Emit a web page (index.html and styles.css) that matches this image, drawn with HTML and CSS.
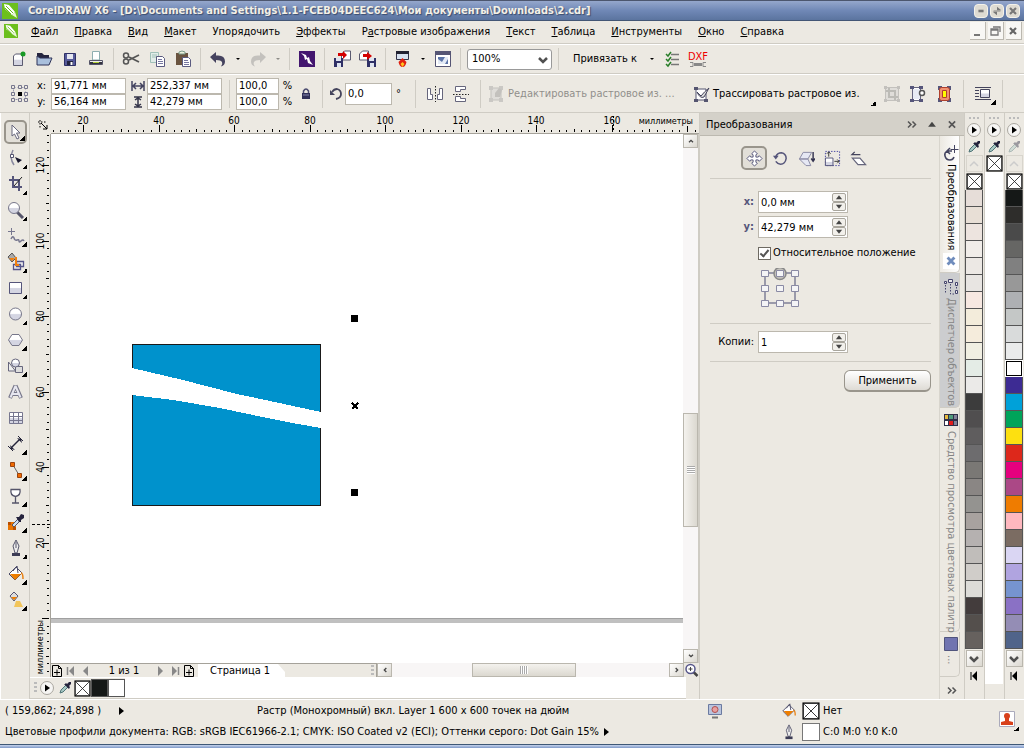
FILE: index.html
```html
<!DOCTYPE html>
<html lang="ru">
  <head>
    <meta charset="UTF-8" />
    <meta name="viewport" content="width=device-width, initial-scale=1.0" />
    <title>CorelDRAW X6</title>
    <link rel="stylesheet" href="styles.css">
  </head>
  <body>
    <svg class="defs">
      <defs>
        <linearGradient id="metal" x1="0" y1="0" x2="0" y2="1">
          <stop offset="0.45" stop-color="#fff" />
          <stop offset="0.55" stop-color="#d4d5e2" />
        </linearGradient>
        <symbol id="logo" viewBox="0 0 16 16">
          <rect width="16" height="16" fill="#6cbf1d" />
          <path d="M2 1l5 1 6 7-3 3-7-6z" fill="#fff" />
          <path d="M10 12l3-3 2 6z" fill="#e8f5d8" />
          <path d="M4 3l7 7M3 5l6 6" stroke="#6cbf1d" />
        </symbol>
        <symbol id="dropper" viewBox="0 0 14 14">
          <path d="M2 12l1-3 5-5 2 2-5 5z" fill="#a8c8c4" stroke="#4f7477" />
          <path d="M7 3l1-1 1 1 2-2h2v2l-2 2 1 1-1 2-5-5z" fill="#25233c" />
        </symbol>
        <symbol id="play" viewBox="0 0 16 16">
          <circle cx="8" cy="8" r="6.5" fill="#f6f5f3" stroke="#aaa7a0" />
          <path d="M6 4.500l5 3.500-5 3.500z" fill="#000" />
        </symbol>
        <symbol id="nocolor" viewBox="0 0 16 16">
          <rect x="1" y="1" width="14" height="14" fill="#fff" stroke="#000" stroke-width="1.200" />
          <path d="M2 2l12 12M14 2L2 14" stroke="#222" stroke-width=".8" />
        </symbol>
        <symbol id="addpage" viewBox="0 0 12 12">
          <path d="M1.500 .5h6l3 3v8h-9zM7.500 .5v3h3M3 7.500h6M6 4.500v6" fill="none" stroke="#000" />
        </symbol>
        <symbol id="bucket" viewBox="0 0 18 18">
          <path d="M2 9l7-7 6 6-7 7z" fill="#fff" stroke="#4b4b67" />
          <path d="M3 9h11l-6 6z" fill="#ee7e00" />
          <path d="M6 6l4-5 1 7" fill="none" stroke="#4b4b67" />
          <path d="M14 8q2 0 2 6" fill="none" stroke="#e88010" stroke-width="1.500" />
        </symbol>
        <symbol id="nib" viewBox="0 0 18 18">
          <path d="M9 1l3 6-2 7H8L6 7z" fill="#eee" stroke="#55556b" />
          <path d="M9 3v6" stroke="#55556b" />
          <path d="M5 14h8v3H5z" fill="#3c3c55" />
        </symbol>
        <symbol id="up" viewBox="0 0 9 5"><path d="M1 4.500L4.500 0 8 4.500z" fill="#444" /></symbol>
        <symbol id="down" viewBox="0 0 9 5"><path d="M1 .5h7L4.500 5z" fill="#444" /></symbol>
        <symbol id="angle" viewBox="0 0 9 6"><path d="M1.500 5l3-3 3 3" fill="none" stroke="#444" stroke-width="2" /></symbol>
        <symbol id="chevron" viewBox="0 0 10 10"><path d="M1 3l4 4 4-4" fill="none" stroke="#505050" stroke-width="2.500" /></symbol>
        <symbol id="more" viewBox="0 0 10 8"><path d="M1 1l3 3-3 3M5.500 1l3 3-3 3" fill="none" stroke="#555" stroke-width="1.500" /></symbol>
      </defs>
    </svg>

    <header class="titlebar">
      <svg class="ic16"><use href="#logo" /></svg>
      <h1>CorelDRAW X6 - [D:\Documents and Settings\1.1-FCEB04DEEC624\Мои документы\Downloads\2.cdr]</h1>
      <button class="winbtn" aria-label="Свернуть"><svg viewBox="0 0 14 14"><path d="M4 7h6" stroke="#777" stroke-width="3" /></svg></button>
      <button class="winbtn" aria-label="Развернуть"><svg viewBox="0 0 14 14"><path d="M7 2v4h5zM7 12V8H2z" fill="#777" /><path d="M3 7h8" stroke="#777" /></svg></button>
      <button class="winbtn" aria-label="Закрыть"><svg viewBox="0 0 14 14"><path d="M3.500 3.500l7 7M10.500 3.500l-7 7" stroke="#777" stroke-width="2.500" /></svg></button>
    </header>

    <nav class="menubar">
      <svg class="doc-logo"><use href="#logo" /></svg>
      <button><u>Ф</u>айл</button>
      <button><u>П</u>равка</button>
      <button><u>В</u>ид</button>
      <button><u>М</u>акет</button>
      <button>Упоря<u>д</u>очить</button>
      <button><u>Э</u>ффекты</button>
      <button>Р<u>а</u>стровые изображения</button>
      <button><u>Т</u>екст</button>
      <button><u>Т</u>аблица</button>
      <button><u>И</u>нструменты</button>
      <button><u>О</u>кно</button>
      <button><u>С</u>правка</button>
      <span class="fill"></span>
      <button class="mdi" aria-label="Свернуть документ"><svg viewBox="0 0 14 14"><path d="M4 11h6" stroke="#777" stroke-width="2" /></svg></button>
      <button class="mdi" aria-label="Восстановить документ"><svg viewBox="0 0 14 14"><path d="M5 3h7v5M3 5h7v6H3zM3 6h7" fill="none" stroke="#777" stroke-width="1.300" /></svg></button>
      <button class="mdi" aria-label="Закрыть документ"><svg viewBox="0 0 14 14"><path d="M4 4l6 6M10 4l-6 6" stroke="#666" stroke-width="2.200" /></svg></button>
    </nav>

    <div class="toolbar">
      <button class="tool" aria-label="Создать"><svg viewBox="0 0 18 18"><path d="M4.500 6l2-2h7v11.500h-9z" fill="url(#metal)" stroke="#5b5b70" /><circle cx="14" cy="4" r="2.500" fill="#189a26" /></svg></button>
      <button class="tool" aria-label="Открыть"><svg viewBox="0 0 18 18"><path d="M2 3h5l2 2h5v3H2z" fill="#25253f" /><path d="M2 15V6l3 2h12l-3 7z" fill="#a9bfdc" stroke="#2e3358" /></svg></button>
      <button class="tool" aria-label="Сохранить"><svg viewBox="0 0 18 18"><path d="M3.500 3.500h11v12h-11z" fill="#565a9a" stroke="#2f3066" /><path d="M6 4h6v5H6z" fill="#e4e6f0" /><path d="M6 11h6v4H6z" fill="#232440" /><path d="M9.500 12h2v3h-2z" fill="#fff" /></svg></button>
      <button class="tool" aria-label="Печать"><svg viewBox="0 0 18 18"><path d="M5.500 1.500h7V10h-7z" fill="#fff" stroke="#8faeb0" /><path d="M2.500 10.500h13v4h-13z" fill="#eee" stroke="#555568" /><path d="M3 12h12v2H3z" fill="#33333f" /><path d="M6 12h6v1H6z" fill="#b5d43b" /></svg></button>
      <i class="sep"></i>
      <button class="tool" aria-label="Вырезать"><svg viewBox="0 0 18 18"><path d="M17 5L7 10M17 12L7 7" stroke="#555" stroke-width="1.800" /><circle cx="4" cy="5.500" r="2.500" fill="none" stroke="#555" stroke-width="1.500" /><circle cx="4" cy="11.500" r="2.500" fill="none" stroke="#555" stroke-width="1.500" /></svg></button>
      <button class="tool" aria-label="Копировать"><svg viewBox="0 0 18 18"><path d="M2.500 2.500h8v10h-8z" fill="#e1ece8" stroke="#9fc0b8" /><path d="M4 5h5M4 7h5" stroke="#9fc0b8" /><path d="M8.500 6.500h6l2 2v8h-8z" fill="#fff" stroke="#5b5b80" /><path d="M10 9.500h4M10 11.500h5M10 13.500h5" stroke="#7777a0" /></svg></button>
      <button class="tool" aria-label="Вставить"><svg viewBox="0 0 18 18"><path d="M2 3h12v12H2z" fill="#6a5440" /><path d="M5 4V2l3-1 3 1v2z" fill="#eef4e0" stroke="#7b9a88" /><path d="M8.500 7.500h6l2 2v7h-8z" fill="#fff" stroke="#5b5b80" /><path d="M10 10.500h4M10 12.500h5M10 14.500h5" stroke="#7777a0" /></svg></button>
      <i class="sep"></i>
      <button class="tool" aria-label="Отменить"><svg viewBox="0 0 18 18"><path d="M1 7l6-5v3.500q9-1 9 6 0 4-4 5 2-2 1-4.500-1-2-6-2V13z" fill="#45435f" /></svg></button>
      <button class="caret" aria-label="Список отмены"></button>
      <button class="tool faded" aria-label="Повторить"><svg viewBox="0 0 18 18"><path d="M17 7l-6-5v3.500q-9-1-9 6 0 4 4 5-2-2-1-4.500 1-2 6-2V13z" fill="#888" /></svg></button>
      <button class="caret faded" aria-label="Список повтора"></button>
      <i class="sep"></i>
      <button class="tool" aria-label="Corel Connect"><svg viewBox="0 0 18 18"><path d="M1 1h16v16H1z" fill="#43166f" /><path d="M3 3l5 2 1 3 2-1 1 4 3 4-5-2-1-4-2 1-1-4z" fill="#fff" /></svg></button>
      <i class="sep"></i>
      <button class="tool" aria-label="Импорт"><svg viewBox="0 0 18 18"><path d="M8.500 4l3-3h6v9h-9z" fill="#fff" stroke="#5b5b70" /><path d="M1 8h9v9H1z" fill="#2f3066" /><path d="M3 8h5v3H3zM4 13h4v4H4z" fill="#dfe4f0" /><path d="M5 3h5V1l4 4-4 4V6H5z" fill="#d40000" /></svg></button>
      <button class="tool" aria-label="Экспорт"><svg viewBox="0 0 18 18"><path d="M.5 4l3-3h6v9h-9z" fill="#fff" stroke="#5b5b70" /><path d="M8 8h9v9H8z" fill="#2f3066" /><path d="M10 8h5v3h-5zM11 13h4v4h-4z" fill="#dfe4f0" /><path d="M4 4h4V2l5 4-5 4V7H4z" fill="#d40000" /></svg></button>
      <i class="sep"></i>
      <button class="tool" aria-label="Запуск приложений"><svg viewBox="0 0 18 18"><path d="M2.500 1.500h12v8h-12z" fill="#d8e2f0" stroke="#34344a" /><path d="M2 1h13v3H2z" fill="#222232" /><path d="M8.500 8l4 4q-1 5-4 5t-4-5z" fill="#e02010" /><path d="M8.500 12l2 2-2 3-2-3z" fill="#ffc31e" /></svg></button>
      <button class="caret" aria-label="Приложения"></button>
      <button class="tool" aria-label="Экран приветствия"><svg viewBox="0 0 18 18"><path d="M1.500 1.500h15v15h-15z" fill="#fff" stroke="#555574" /><path d="M1 1h16v4H1z" fill="#555574" /><path d="M4 7h10v7H4z" fill="#5c74a8" /><path d="M4 14V9l4 3 3-5h3v2l-3 5z" fill="#e3eaf5" /></svg></button>
      <i class="sep"></i>
      <div class="zoom">
        <select aria-label="Масштаб"><option>100%</option></select>
        <svg><use href="#chevron" /></svg>
      </div>
      <i class="sep"></i>
      <button class="textbtn">Привязать к</button>
      <button class="caret" aria-label="Варианты привязки"></button>
      <button class="tool" aria-label="Параметры"><svg viewBox="0 0 18 18"><path d="M8 4.500h8M8 9.500h8M8 14.500h8" stroke="#777" stroke-width="1.500" /><path d="M3 4l2 2 3-4M3 9l2 2 3-4M3 14l2 2 3-4" fill="none" stroke="#2a7f2a" stroke-width="1.500" /></svg></button>
      <button class="dxf" aria-label="DXF">DXF<svg viewBox="0 0 16 5"><path d="M4 2.500h8" stroke="#888" stroke-width="3" /><path d="M0 .5h3v4H0M16 .5h-3v4h3" fill="none" stroke="#888" /></svg></button>
    </div>

    <div class="propbar">
      <svg class="origin" viewBox="0 0 17 17"><path d="M2.500 2.500h12v12h-12z" fill="none" stroke="#9a9ab0" stroke-dasharray="2" /><path d="M7 7h4v4H7z" fill="#000" /><path d="M.5.500h3v3h-3zM7.500.500h3v3h-3zM13.500.500h3v3h-3zM.5 7.500h3v3h-3zM13.500 7.500h3v3h-3zM.5 13.500h3v3h-3zM7.500 13.500h3v3h-3zM13.500 13.500h3v3h-3z" fill="#ece9e2" stroke="#77778e" /></svg>
      <div class="pair">
        <label for="posx">x:</label><input id="posx" value="91,771 мм">
        <label for="posy">y:</label><input id="posy" value="56,164 мм">
      </div>
      <div class="pair">
        <label for="w" aria-label="Ширина"><svg viewBox="0 0 14 12"><path d="M1 1v10M13 1v10M2 6h10M5 3L2 6l3 3M9 3l3 3-3 3" fill="none" stroke="#444460" stroke-width="1.500" /></svg></label><input id="w" value="252,337 мм">
        <label for="h" aria-label="Высота"><svg viewBox="0 0 14 12"><path d="M3 1h8M3 11h8M7 2v8M4 4l3-2 3 2M4 8l3 2 3-2" fill="none" stroke="#333348" stroke-width="1.500" /></svg></label><input id="h" value="42,279 мм">
      </div>
      <i class="sep"></i>
      <div class="pair scale">
        <input id="sx" aria-label="Масштаб X" value="100,0"><label for="sx">%</label>
        <input id="sy" aria-label="Масштаб Y" value="100,0"><label for="sy">%</label>
      </div>
      <button class="tool lock" aria-label="Сохранять пропорции"><svg viewBox="0 0 18 18"><path d="M6.500 9V6q2.500-4 5 0v3" fill="none" stroke="#4c4c70" stroke-width="1.500" /><path d="M5 8h8v6H5z" fill="#303058" /><path d="M6 10h6" stroke="#8888b0" /></svg></button>
      <i class="sep"></i>
      <label class="turn" for="angle" aria-label="Угол поворота"><svg viewBox="0 0 14 14"><path d="M3 5q2-3 5-3 4 1 4 5 0 4-5 5" fill="none" stroke="#44445c" stroke-width="1.800" /><path d="M1 3v5h5z" fill="#44445c" /></svg></label>
      <input class="turn-value" id="angle" value="0,0"><span class="deg">°</span>
      <i class="sep"></i>
      <button class="tool" aria-label="Отразить по горизонтали"><svg viewBox="0 0 18 18"><path d="M1.500 3.500h3v6h2v5h-5zM16.500 3.500h-3v6h-2v5h5z" fill="#fff" stroke="#66667c" /><path d="M9.500 1v16" stroke="#222" stroke-dasharray="1.500" /></svg></button>
      <button class="tool" aria-label="Отразить по вертикали"><svg viewBox="0 0 18 18"><path d="M3.500 6.500v-5h10v3h-5v2zM3.500 11.500v5h10v-3h-5v-2z" fill="#fff" stroke="#66667c" /><path d="M1 9.500h16" stroke="#222" stroke-dasharray="1.500" /></svg></button>
      <i class="sep"></i>
      <button class="textbtn wide faded" disabled><svg viewBox="0 0 18 18"><path d="M4 3h10v12H4z" fill="#ccc" stroke="#888" /><path d="M2 1h4v4H2zM12 1h4v4h-4zM2 13h4v4H2zM12 13h4v4h-4z" fill="#999" /><path d="M8 12V8l4-5 3 2-2 7z" fill="#888" /></svg>Редактировать растровое из. ...</button>
      <button class="textbtn trace"><svg viewBox="0 0 18 18"><path d="M4 4h10v11H4z" fill="#fff" stroke="#555570" /><path d="M2 2h4v3H2zM2 14h4v3H2zM12 14h4v3h-4z" fill="#555570" /><path d="M5 7l4 4q3-4 8-8l-5 9q-4 2-7-5z" fill="#ddd" stroke="#44445c" /></svg>Трассировать растровое из.<b class="corner"></b></button>
      <button class="tool faded" aria-label="Обрезать растр"><svg viewBox="0 0 18 18"><path d="M2.500 2.500h13v13h-13z" fill="#ccc" stroke="#888" /><path d="M6 3v9h9M3 6h9v9" fill="none" stroke="#777" stroke-width="2" /><path d="M1 1h3v3H1zM14 1h3v3h-3zM1 14h3v3H1zM14 14h3v3h-3z" fill="#888" /></svg></button>
      <button class="tool" aria-label="Цветовая маска"><svg viewBox="0 0 18 18"><path d="M3.500 2.500h8v13h-8z" fill="#fff" stroke="#666680" /><path d="M1 1h4v3H1zM10 1h4v3h-4zM1 14h4v3H1zM10 14h4v3h-4z" fill="#55557a" /><path d="M4 4h7v10H4z" fill="#e8ebf4" /><circle cx="13" cy="8" r="2.500" fill="#fff" stroke="#555" stroke-width="1.500" /></svg></button>
      <button class="tool" aria-label="Абрис растра"><svg viewBox="0 0 18 18"><path d="M3 1h4v4H3zM12 1h4v4h-4zM3 13h4v4H3zM12 13h4v4h-4z" fill="#55557a" /><rect x="4.500" y="2.500" width="10" height="13" rx="2" fill="#f09070" stroke="#b0402c" /><path d="M7.500 5.500h4v7h-4z" fill="#ff0" stroke="#b0402c" /></svg></button>
      <i class="sep"></i>
      <button class="tool" aria-label="Обтекание текстом"><svg viewBox="0 0 18 18"><path d="M1 2.500h16M1 5.500h4M1 8.500h4M1 11.500h4M1 14.500h16" stroke="#44445c" /><path d="M6.500 4.500h9v8h-9z" fill="url(#metal)" stroke="#44445c" /></svg><b class="corner"></b></button>
      <i class="sep"></i>
    </div>

    <main class="workspace">
      <div class="toolbox">
        <button class="active" aria-label="Указатель"><svg viewBox="0 0 18 18"><path d="M5 2l8 8H9.500l2.500 5-2 1-2.500-5L5 13z" fill="#fff" stroke="#66667c" /></svg><b class="corner"></b></button>
        <button aria-label="Форма"><svg viewBox="0 0 18 18"><path d="M6 1q-4 8 1 15" fill="none" stroke="#8a8aa0" stroke-width="1.500" /><path d="M3.500 5.500h3v3h-3z" fill="#fff" stroke="#555570" /><path d="M8 8l7 3-4 3z" fill="#15152c" /></svg><b class="corner"></b></button>
        <button aria-label="Обрезка"><svg viewBox="0 0 18 18"><path d="M6 1v11h9M2 5h10v11" fill="none" stroke="#55557a" stroke-width="2" /><path d="M7 11l8-9" stroke="#222" /></svg><b class="corner"></b></button>
        <button aria-label="Масштаб"><svg viewBox="0 0 18 18"><path d="M10 11l6 6" stroke="#55556a" stroke-width="3" /><circle cx="7" cy="7" r="5.500" fill="url(#metal)" stroke="#77778a" /></svg><b class="corner"></b></button>
        <button aria-label="Свободная форма"><svg viewBox="0 0 18 18"><path d="M4.500 1v7M1 4.500h7" stroke="#77778f" /><path d="M4 12q2-4 3-1t3 2 2 1 2 0 3 0" fill="none" stroke="#77778f" stroke-width="1.500" /></svg><b class="corner"></b></button>
        <button aria-label="Интеллектуальная заливка"><svg viewBox="0 0 18 18"><path d="M1 4l4-4 4 5-4 4z" fill="#aaa" stroke="#555" /><path d="M2 5h6L5 8z" fill="#f08010" /><path d="M6.500 11.500h7v5h-7zM9.500 8.500h7v5h-7z" fill="#eee" stroke="#55558a" stroke-width="1.300" /><path d="M9 4v8h3" fill="none" stroke="#f08010" stroke-width="2" /></svg><b class="corner"></b></button>
        <button aria-label="Прямоугольник"><svg viewBox="0 0 18 18"><path d="M2.500 3.500h12v11h-12z" fill="url(#metal)" stroke="#55557a" /></svg><b class="corner"></b></button>
        <button aria-label="Эллипс"><svg viewBox="0 0 18 18"><circle cx="8.500" cy="9" r="6" fill="url(#metal)" stroke="#77778a" /></svg><b class="corner"></b></button>
        <button aria-label="Многоугольник"><svg viewBox="0 0 18 18"><path d="M5 3.500h7l3.500 5.500-3.500 5.500H5L1.500 9z" fill="url(#metal)" stroke="#77778a" /></svg><b class="corner"></b></button>
        <button aria-label="Основные фигуры"><svg viewBox="0 0 18 18"><path d="M1.500 5l7 9h-7z" fill="#eee" stroke="#66667c" /><path d="M8.500 9.500h7v6h-7z" fill="#ddd" stroke="#66667c" /><circle cx="8.500" cy="6" r="4" fill="url(#metal)" stroke="#66667c" /></svg><b class="corner"></b></button>
        <button aria-label="Текст"><svg viewBox="0 0 18 18"><path d="M8.500 2.500L14 15M8.500 2.500L3 15M5 11h7" fill="none" stroke="#77778a" stroke-width="4" /><path d="M8.500 3L13.500 14.500M8.500 3L3.500 14.500M5.500 11h6" fill="none" stroke="#e6e6ef" stroke-width="2" /></svg></button>
        <button aria-label="Таблица"><svg viewBox="0 0 18 18"><path d="M2.500 3.500h13v11h-13z" fill="url(#metal)" /><path d="M2.500 3.500h13v11h-13zM6.500 3.500v11M11.500 3.500v11M2.500 7.500h13M2.500 11.500h13" fill="none" stroke="#77778f" /></svg></button>
        <button aria-label="Размер"><svg viewBox="0 0 18 18"><path d="M4 13l9-9" stroke="#222238" stroke-width="1.500" /><path d="M3 10l1 4 4 1zM10 3l4 1 1 4z" fill="#222238" /><path d="M1 11l5 5M11 1l5 5" stroke="#222238" /></svg><b class="corner"></b></button>
        <button aria-label="Соединитель"><svg viewBox="0 0 18 18"><path d="M6 4l6 10" stroke="#666" /><path d="M3.500 1.500h4v4h-4zM10.500 12.500h4v4h-4z" fill="#f06a00" stroke="#9a4410" /></svg><b class="corner"></b></button>
        <button aria-label="Интерактивная заливка"><svg viewBox="0 0 18 18"><path d="M4 2.500h9q1 6-4.500 7Q3 8.500 4 2.500zM8.500 9.500v6M5 16h7" fill="#fff" stroke="#55556a" stroke-width="1.300" /></svg><b class="corner"></b></button>
        <button aria-label="Цветовая пипетка"><svg viewBox="0 0 18 18"><path d="M1 9h8v8H1z" fill="#e87400" /><path d="M1 9h3v3H1zM6 14h3v3H6z" fill="#b84e00" /><path d="M5 12l6-6 2 2-6 6z" fill="#cde" stroke="#556" /><path d="M9 4h3l2-3 3 1v3l-3 2v2h-2z" fill="#25233c" /></svg><b class="corner"></b></button>
        <button aria-label="Перо абриса"><svg><use href="#nib" /></svg><b class="corner"></b></button>
        <button aria-label="Заливка"><svg><use href="#bucket" /></svg><b class="corner"></b></button>
        <button aria-label="Прозрачность"><svg viewBox="0 0 18 18"><path d="M3 5l4-4 4 4-4 5z" fill="#ddd" stroke="#555570" /><path d="M4 6h6L7 9z" fill="#ee7e00" /><path d="M9 10h4l3 6H7z" fill="#f2c55a" /></svg><b class="corner"></b></button>
      </div>

      <section class="document">
        <div class="ruler-corner"><svg viewBox="0 0 12 12"><path d="M1 3h9M3 1v9" stroke="#000" stroke-dasharray="1.500" /><path d="M4 4l6 6M10 6v4H6" fill="none" stroke="#000" /></svg></div>
        <div class="ruler-top"><svg id="rulerX"></svg><span>миллиметры</span></div>
        <div class="ruler-left"><svg id="rulerY"></svg><span>миллиметры</span></div>
        <div class="canvas">
          <svg width="640" height="530" shape-rendering="crispEdges">
            <path d="M81 234V210h189V278L219 267 186 260 132 246z" fill="#0092cc" />
            <path d="M81 261L122 266 169 274 202 281 236 288 270 294V372H81z" fill="#0092cc" />
            <path d="M81.500 234V210.500h188V278M81.500 261V371.500h188V294" fill="none" stroke="#1a1a1a" />
            <path d="M300 181h7v7h-7zM300 355h7v7h-7z" />
            <path d="M301 269l6 6M307 269l-6 6" stroke="#000" stroke-width="2" />
          </svg>
          <div class="page-edge"></div>
        </div>
        <div class="vscroll">
          <button aria-label="Вверх"><svg><use href="#angle" /></svg></button>
          <i class="before"></i><i class="thumb"></i><i class="after"></i>
          <button aria-label="Вниз"><svg class="flip"><use href="#angle" /></svg></button>
        </div>
        <div class="pagebar">
          <div class="pages">
            <button aria-label="Добавить страницу"><svg viewBox="0 0 12 12"><use href="#addpage" /></svg></button>
            <button aria-label="Первая"><svg viewBox="0 0 12 12"><path d="M2.500 2v8" stroke="#888" stroke-width="1.500" /><path d="M9 1v10L4 6z" fill="#888" /></svg></button>
            <button aria-label="Предыдущая"><svg viewBox="0 0 12 12"><path d="M9 1v10L4 6z" fill="#888" /></svg></button>
            <span>1 из 1</span>
            <button aria-label="Следующая"><svg viewBox="0 0 12 12"><path d="M3 1v10l5-5z" fill="#888" /></svg></button>
            <button aria-label="Последняя"><svg viewBox="0 0 12 12"><path d="M9.500 2v8" stroke="#888" stroke-width="1.500" /><path d="M3 1v10l5-5z" fill="#888" /></svg></button>
            <button aria-label="Добавить страницу после"><svg viewBox="0 0 12 12"><use href="#addpage" /></svg></button>
            <a class="pagetab" href="#page1">Страница 1</a>
            <span class="fill"></span>
            <i class="grip-v"></i>
          </div>
          <div class="hscroll">
            <button aria-label="Влево"><svg class="left"><use href="#angle" /></svg></button>
            <i class="before"></i><i class="thumb"></i><i class="after"></i>
            <button aria-label="Вправо"><svg class="right"><use href="#angle" /></svg></button>
          </div>
          <button class="nav" aria-label="Навигатор"><svg viewBox="0 0 14 14"><path d="M9 9l4 4" stroke="#444" stroke-width="2.500" /><circle cx="6" cy="6" r="4.500" fill="#fff" stroke="#55558a" stroke-width="1.500" /><path d="M4 6h4M6 4v4" stroke="#444" /></svg></button>
        </div>
        <div class="docpalette">
          <i class="grip-v"></i>
          <svg class="ic16"><use href="#play" /></svg>
          <svg class="ic14"><use href="#dropper" /></svg>
          <svg class="ic17"><use href="#nocolor" /></svg>
          <button class="chip black" aria-label="Черный"></button>
          <button class="chip white" aria-label="Белый"></button>
          <span class="fill"></span>
        </div>
      </section>

      <aside class="docker">
        <div class="docker-head">
          <h2>Преобразования</h2>
          <button aria-label="Свернуть панель"><svg viewBox="0 0 10 8"><use href="#more" /></svg></button>
          <button aria-label="Скрыть"><svg viewBox="0 0 9 5"><use href="#up" /></svg></button>
          <button aria-label="Закрыть панель"><svg viewBox="0 0 10 10"><path d="M1.500 1.500l7 7M8.500 1.500l-7 7" stroke="#555" stroke-width="1.800" /></svg></button>
        </div>
        <div class="docker-body">
          <div class="modes">
            <button class="active" aria-label="Положение"><svg viewBox="0 0 18 18"><path d="M9 1l3 3-1.500 1v2.500H13L14 6l3 3-3 3-1-1.500h-2.500V13l1.500 1-3 3-3-3 1.500-1v-2.500H5L4 12 1 9l3-3 1 1.500h2.500V5L6 4z" fill="#fff" stroke="#55557a" /></svg></button>
            <button aria-label="Поворот"><svg viewBox="0 0 18 18"><path d="M4 7q2-4 6-4 5 1 5 6-1 6-6 6-3 0-5-3" fill="none" stroke="#55557a" stroke-width="1.600" /><path d="M1 6h6l-3 4z" fill="#55557a" /></svg></button>
            <button aria-label="Масштаб и отражение"><svg viewBox="0 0 18 18"><path d="M1.500 9.500l4-7h9l-4 7zM1.500 9.500h9l3 7h-5z" fill="#e6e8f4" stroke="#8888a4" /><path d="M16 2v9M14 9l2 3 2-3" fill="none" stroke="#333350" stroke-width="1.500" /></svg></button>
            <button aria-label="Размер"><svg viewBox="0 0 18 18"><path d="M1.500 1.500h15v15h-15z" fill="none" stroke="#4444a0" stroke-dasharray="1.500" /><path d="M1.500 8.500h8v8h-8z" fill="url(#metal)" stroke="#55557a" /><path d="M5 7V2M3 4l2-2 2 2M11 12h5M14 10l2 2-2 2" fill="none" stroke="#333" /></svg></button>
            <button aria-label="Наклон"><svg viewBox="0 0 18 18"><path d="M2.500 8.500h8l6 7h-8z" fill="#fff" stroke="#66667c" stroke-width="1.300" /><path d="M2 5h9M5 2L2 5h3" fill="none" stroke="#44445c" stroke-width="1.300" /></svg></button>
          </div>
          <hr>
          <div class="fields">
            <label for="dx"><b>x:</b></label>
            <div class="spin"><input id="dx" value="0,0 мм"><button aria-label="Больше"><svg><use href="#up" /></svg></button><button aria-label="Меньше"><svg><use href="#down" /></svg></button></div>
            <label for="dy"><b>y:</b></label>
            <div class="spin"><input id="dy" value="42,279 мм"><button aria-label="Больше"><svg><use href="#up" /></svg></button><button aria-label="Меньше"><svg><use href="#down" /></svg></button></div>
          </div>
          <label class="check"><input type="checkbox" checked>Относительное положение</label>
          <svg class="anchors" viewBox="0 0 40 40">
            <path d="M5 5h30v30H5z" fill="none" stroke="#9a9aaa" stroke-width="2" />
            <circle cx="20" cy="5.500" r="6" fill="#c4c2bc" stroke="#888" stroke-width="1.500" />
            <path d="M1.500 2.500h7v6h-7zM16.500 2.500h7v6h-7zM31.500 2.500h7v6h-7zM1.500 17.500h7v6h-7zM16.500 17.500h7v6h-7zM31.500 17.500h7v6h-7zM1.500 32.500h7v6h-7zM16.500 32.500h7v6h-7zM31.500 32.500h7v6h-7z" fill="#f4f4f6" stroke="#8a8aa4" />
          </svg>
          <hr>
          <div class="fields copies">
            <label for="copies">Копии:</label>
            <div class="spin"><input id="copies" value="1"><button aria-label="Больше"><svg><use href="#up" /></svg></button><button aria-label="Меньше"><svg><use href="#down" /></svg></button></div>
          </div>
          <hr>
          <button class="apply">Применить</button>
        </div>
        <div class="docker-tabs">
          <button class="tab1"><svg viewBox="0 0 16 16"><path d="M9 6H4q-3 2-2 5 1 4 5 4 3 0 4-3M7 3L4 6l3 3" fill="none" stroke="#444460" stroke-width="1.500" /><path d="M11.500 0v8M7.500 4.500h8" stroke="#444460" /></svg><span>Преобразования</span><svg viewBox="0 0 14 14"><path d="M0 0h14v14H0z" fill="#fff" /><path d="M4 4l6 6M10 4l-6 6" stroke="#6f8cbc" stroke-width="2.500" /></svg></button>
          <button class="tab2"><svg viewBox="0 0 16 16"><path d="M1.500 2.500h2v2h-2zM5.500.500h4v3h-4zM12.500 3.500h2v3h-2zM12.500 11.500h2v3h-2z" fill="#eee" stroke="#44446c" /><path d="M2.500 6v9M7.500 5v10h4M13.500 8v3" stroke="#44446c" fill="none" stroke-dasharray="1.500" /></svg><span>Диспетчер объектов</span></button>
          <button class="tab3"><svg viewBox="0 0 16 16"><path d="M1 2h14v12H1z" fill="#302f48" /><path d="M2 3h3v4H2z" fill="#e6b940" /><path d="M6 3h4v4H6z" fill="#4f9b7c" /><path d="M11 3h3v4h-3zM11 9h3v4h-3z" fill="#83839a" /><path d="M2 9h3v4H2z" fill="#fff" /><path d="M6 9h4v4H6z" fill="#e21c1c" /></svg><span>Средство просмотра цветовых палитр</span></button>
          <button class="tab4" aria-label="Цвет"><svg viewBox="0 0 16 16"><path d="M1.500 1.500h13v13h-13z" fill="#7074b0" stroke="#50547c" /></svg><span>...</span></button>
          <button class="moretabs" aria-label="Ещё"><svg viewBox="0 0 10 8"><use href="#more" /></svg></button>
        </div>
      </aside>

      <div class="palette">
        <i class="grip"></i><svg class="ic16"><use href="#play" /></svg><svg class="ic14"><use href="#dropper" /></svg>
        <button class="pgup" aria-label="Вверх"><svg viewBox="0 0 10 10"><path d="M1 7l4-4 4 4" fill="none" stroke="#ccc" stroke-width="1.500" /></svg></button>
        <svg class="ic17"><use href="#nocolor" /></svg>
        <div class="swatches" id="palA"></div>
        <button class="pgdn" aria-label="Вниз"><svg viewBox="0 0 10 10"><use href="#chevron" /></svg></button>
        <svg class="first" viewBox="0 0 8 10"><path d="M1 1v8" stroke="#000" /><path d="M7 0v10L2 5z" /></svg>
      </div>
      <div class="palette">
        <i class="grip"></i><svg class="ic16"><use href="#play" /></svg><svg class="ic14"><use href="#dropper" /></svg>
        <svg class="ic17"><use href="#nocolor" /></svg>
        <div class="blank"></div>
      </div>
      <div class="palette">
        <i class="grip"></i><svg class="ic16"><use href="#play" /></svg><svg class="ic14 faded"><use href="#dropper" /></svg>
        <button class="pgup" aria-label="Вверх"><svg viewBox="0 0 10 10"><path d="M1 7l4-4 4 4" fill="none" stroke="#ccc" stroke-width="1.500" /></svg></button>
        <svg class="ic17"><use href="#nocolor" /></svg>
        <div class="swatches" id="palB"></div>
        <button class="pgdn" aria-label="Вниз"><svg viewBox="0 0 10 10"><use href="#chevron" /></svg></button>
        <svg class="first" viewBox="0 0 8 10"><path d="M1 1v8" stroke="#000" /><path d="M7 0v10L2 5z" /></svg>
      </div>
    </main>

    <footer class="status">
      <div class="lines">
        <p><span class="coords">( 159,862; 24,898 )</span><b class="tri"></b><span class="object">Растр (Монохромный) вкл. Layer 1 600 x 600 точек на дюйм</span></p>
        <p>Цветовые профили документа: RGB: sRGB IEC61966-2.1; CMYK: ISO Coated v2 (ECI); Оттенки серого: Dot Gain 15% <b class="tri"></b></p>
      </div>
      <svg class="proof" viewBox="0 0 16 16"><path d="M1.500 1.500h13v10h-13z" fill="#b9c4dd" stroke="#6b7aa0" /><path d="M5 14.500h6" stroke="#777" stroke-width="2" /><circle cx="8" cy="6.500" r="3" fill="#e8a0a0" stroke="#b05050" /></svg>
      <div class="colors">
        <svg class="ic16"><use href="#bucket" /></svg><svg class="ic18"><use href="#nocolor" /></svg><span>Нет</span>
        <svg class="ic16"><use href="#nib" /></svg><i class="outline"></i><span>C:0 M:0 Y:0 K:0</span>
      </div>
      <button class="user" aria-label="Пользователь"><svg viewBox="0 0 16 16"><path d="M.5.500h15v15H.5z" fill="#fff" stroke="#aab" /><circle cx="8" cy="5" r="3" fill="#d8401a" /><path d="M6 7h4v3l4 1v3H2v-3l4-1z" fill="#d8401a" /></svg><b class="corner"></b></button>
    </footer>
    <div class="taskbar"></div>

    <script>
      // rulers: one tick every 2 mm, label every 20 mm
      const step = 75.5;
      function ruler(id, start, value, dir, mark) {
        const el = document.getElementById(id);
        const vertical = id == "rulerY";
        const size = vertical ? el.clientHeight : el.clientWidth;
        let out = "";
        for (let i = -9; ; i++) {
          const p = Math.round(start + (i * step) / 10);
          if (p > size) break;
          if (p < 0) continue;
          const len = i % 10 == 0 ? 7 : i % 5 == 0 ? 3 : 2;
          out += vertical
            ? `<rect x="${19 - len}" y="${p}" width="${len}" height="1"/>`
            : `<rect x="${p}" y="${19 - len}" width="1" height="${len}"/>`;
          // keep the end free for the unit name
          if (i % 10 == 0 && p < size - 75) {
            const n = value + dir * i * 2;
            out += vertical
              ? `<text transform="translate(14 ${p}) rotate(-90)">${n}</text>`
              : `<text x="${p}" y="11">${n}</text>`;
          }
        }
        out += vertical
          ? `<path d="M2 ${mark}h18" stroke="#000" stroke-dasharray="3 2"/>`
          : `<path d="M${mark} 3v16" stroke="#000" stroke-dasharray="2 2"/>`;
        el.innerHTML = out;
      }
      function drawRulers() {
        ruler("rulerX", 32, 20, 1, 562.5);
        ruler("rulerY", 31, 120, -1, 390.5);
      }
      drawRulers();
      window.addEventListener("resize", drawRulers);

      const palA = "e6ddd8 e8dfd6 ede4df f1ede9 ece8e4 e8e5e2 f7e8e1 f3ecdb f5ecdc f1efe2 e4ece6 ebeae8 3c3c3c 504e4f 5f5d5e 6d6c6e 7a7875 8a8684 949390 a8a29f b5b1b0 c0bdba d0cdc9 dddcd8 433c3c 544f4c 66615e";
      const palB = "151817 2e2d2b 4a4a4a 666664 808080 989898 aeb0b3 c4c7c6 d9dbdb eaebeb ffffff 3d2b93 00a1d9 00a45a fde010 dd281b e5007e ab4886 ef7c00 ffb8bf 7b6c62 dad6f3 b0a4e0 7694cf 8a71c5 948db5 50648a";
      function swatches(id, list) {
        document.getElementById(id).innerHTML = list
          .split(" ")
          .map((c) => `<i class="${c == "ffffff" ? "picked" : ""}" style="background:#${c}"></i>`)
          .join("");
      }
      swatches("palA", palA);
      swatches("palB", palB);
    </script>
  </body>
</html>
```

FILE: styles.css
```css
*,
*::before,
*::after {
  margin: 0;
  padding: 0;
  box-sizing: border-box;
}
body {
  display: flex;
  flex-direction: column;
  min-height: 100vh;
  background: #ece9e2;
  color: #000;
  font-family: "DejaVu Sans Condensed", Tahoma, "Open Sans", sans-serif;
  font-size: 11px;
  line-height: 14px;
  overflow-x: hidden;
}
button,
input,
select {
  font: inherit;
  color: inherit;
}
button {
  position: relative;
  border: 0;
  background: none;
}
input {
  min-width: 0;
  height: 17px;
  padding: 0 2px;
  border: 1px solid #bcb8ae;
  background: #fff;
}
svg {
  display: block;
  flex: none;
}
.defs {
  position: absolute;
  width: 0;
  height: 0;
}
.ic14 {
  width: 14px;
  height: 14px;
}
.ic16 {
  width: 16px;
  height: 16px;
}
.ic17 {
  width: 17px;
  height: 17px;
}
.ic18 {
  width: 18px;
  height: 18px;
}
.fill {
  flex: 1;
}
.faded {
  opacity: 0.4;
}
.corner {
  position: absolute;
  right: 0;
  bottom: 1px;
  width: 5px;
  height: 5px;
  background: linear-gradient(135deg, transparent 50%, #000 50%);
}

/* title and menu */
.titlebar {
  display: flex;
  align-items: center;
  gap: 2px;
  height: 21px;
  padding: 0 4px 0 2px;
  border-top: 1px solid #4c566e;
  border-bottom: 1px solid #435675;
  background: linear-gradient(#95a7cc, #7088b6 50%, #5b749f);
}
.titlebar h1 {
  flex: 1;
  padding-left: 8px;
  color: #f3f0e6;
  font-size: 11px;
  text-shadow: 1px 1px 1px #3b4c6e;
  white-space: nowrap;
}
.winbtn {
  width: 14px;
  height: 14px;
  border: 1px solid #f4f2ea;
  border-radius: 4px;
  background: #dedbd2;
}
.winbtn svg {
  width: 12px;
  height: 12px;
}
.menubar {
  display: flex;
  align-items: center;
  height: 23px;
  padding: 0 2px 2px;
  border-bottom: 1px solid #cfccc4;
}
.menubar button {
  padding: 2px 8px 0;
  white-space: nowrap;
}
.doc-logo {
  width: 14px;
  height: 16px;
  margin: 0 5px 0 2px;
}
.menubar .mdi {
  width: 16px;
  height: 18px;
  margin-left: 2px;
  padding: 0;
  border: solid #bbb8b0;
  border-width: 0 1px 1px 0;
  background: #f8f7f4;
}
.mdi svg {
  width: 14px;
  height: 14px;
}

/* toolbars */
.toolbar,
.propbar {
  display: flex;
  align-items: center;
  padding-left: 5px;
  border-top: 1px solid #fff;
  border-bottom: 1px solid #cfccc4;
}
.toolbar {
  height: 30px;
}
.propbar {
  height: 39px;
}
.sep {
  flex: none;
  width: 1px;
  height: 22px;
  margin: 0 4px;
  background: #cfccc4;
}
.propbar .sep {
  height: 28px;
  margin: 0 6px;
}
.tool {
  display: flex;
  flex: none;
  align-items: center;
  justify-content: center;
  width: 26px;
  height: 24px;
}
.tool svg,
.textbtn svg {
  width: 18px;
  height: 18px;
}
.caret {
  width: 14px;
  height: 20px;
}
.caret::after {
  content: "";
  display: block;
  width: 4px;
  margin: 0 auto;
  border: solid transparent;
  border-width: 2px 2px 0;
  border-top-color: #000;
}
.zoom {
  position: relative;
  width: 85px;
  margin: 0 2px;
}
.zoom select {
  display: block;
  width: 100%;
  height: 21px;
  padding-left: 4px;
  border: 1px solid #999;
  border-radius: 3px;
  background: #fff;
  appearance: none;
}
.zoom svg {
  position: absolute;
  top: 6px;
  right: 4px;
  width: 10px;
  height: 10px;
}
.textbtn {
  display: flex;
  align-items: center;
  gap: 3px;
  padding: 0 8px 0 10px;
  white-space: nowrap;
}
.dxf {
  width: 26px;
  color: #e00;
  line-height: 11px;
}
.dxf svg {
  width: 16px;
  height: 5px;
  margin: 0 auto;
}
.origin {
  width: 17px;
  height: 17px;
  margin: 0 4px 0 6px;
}
.pair {
  display: grid;
  grid-template-columns: 19px 75px;
  align-items: center;
  justify-items: center;
  margin-right: 2px;
}
.pair input {
  width: 100%;
  height: 16px;
}
.pair svg {
  width: 14px;
  height: 12px;
}
.pair + .sep {
  margin-left: 5px;
}
.pair.scale {
  grid-template-columns: 43px 17px;
  margin: 0;
}
.lock {
  width: 20px;
}
.turn svg {
  width: 14px;
  height: 14px;
  margin-right: 2px;
}
.turn-value {
  width: 47px;
  height: 22px;
}
.deg {
  width: 17px;
  padding-left: 4px;
}
.textbtn.wide {
  width: 192px;
  padding: 0;
}
.textbtn.trace {
  width: 187px;
  height: 26px;
  margin-left: 13px;
  padding: 0;
}
.trace .corner {
  right: 3px;
}

/* workspace */
.workspace {
  display: flex;
  flex: 1;
}
.toolbox {
  flex: none;
  width: 30px;
  padding: 7px 2px 0 3px;
  border-left: 1px solid #fff;
  border-right: 1px solid #cfccc4;
}
.toolbox button {
  display: flex;
  align-items: center;
  justify-content: center;
  width: 23px;
  height: 24px;
  margin-bottom: 2px;
}
.toolbox svg {
  width: 18px;
  height: 18px;
}
.toolbox .active,
.modes .active {
  border: 2px solid #99958c;
  border-radius: 5px;
  background: #e2dfd8;
}
.document {
  display: grid;
  grid-template-columns: 21px 1fr 16px;
  grid-template-rows: 21px 1fr 14px 22px;
  flex: 1;
  min-width: 0;
}
.ruler-corner svg {
  width: 12px;
  height: 12px;
  margin: 6px 0 0 7px;
}
.ruler-top {
  position: relative;
  grid-column: 2 / 4;
  overflow: hidden;
  border-bottom: 1px solid #a5a29a;
}
.ruler-left {
  position: relative;
  grid-row: 2 / 4;
  overflow: hidden;
  border-right: 1px solid #a5a29a;
}
.ruler-top svg,
.ruler-left svg {
  position: absolute;
  top: 0;
  left: 0;
  width: 100%;
  height: 100%;
  font-size: 10px;
  text-anchor: middle;
}
.ruler-top span,
.ruler-left span {
  position: absolute;
  background: #ece9e2;
  font-size: 9px;
  line-height: 10px;
}
.ruler-top span {
  top: 3px;
  right: 6px;
}
.ruler-left span {
  bottom: 3px;
  left: 5px;
  writing-mode: vertical-rl;
  transform: rotate(180deg);
}
.canvas {
  position: relative;
  overflow: hidden;
  background: #fff;
}
.canvas svg {
  position: absolute;
  top: 0;
  left: 0;
}
.page-edge {
  position: absolute;
  right: 0;
  bottom: 40px;
  left: 0;
  height: 5px;
  border-top: 1px solid #a0a0a0;
  background: #c0c0c0;
}
.vscroll,
.hscroll {
  display: flex;
  background: #f8f6f6;
}
.vscroll {
  flex-direction: column;
  border-right: 1px solid #cfccc4;
}
.hscroll {
  flex: 1;
}
.vscroll button,
.hscroll button,
.pgdn {
  display: flex;
  flex: none;
  align-items: center;
  justify-content: center;
  width: 15px;
  height: 14px;
  border: 1px solid #bab7ae;
  background: linear-gradient(135deg, #fff, #dbd8d0);
}
.vscroll svg,
.hscroll svg {
  width: 6px;
  height: 4px;
}
.vscroll .flip {
  transform: rotate(180deg);
}
.hscroll .left {
  transform: rotate(-90deg);
}
.hscroll .right {
  transform: rotate(90deg);
}
.thumb {
  display: flex;
  align-items: center;
  justify-content: center;
  border: 1px solid #bab7ae;
  background: linear-gradient(#f4f2ee, #dbd8d0);
}
.vscroll .thumb {
  background: linear-gradient(90deg, #f4f2ee, #dbd8d0);
}
.thumb::after {
  content: "";
  width: 8px;
  height: 8px;
  background: repeating-linear-gradient(90deg, #aaa 0 1px, #fff 1px 2px);
}
.vscroll .thumb::after {
  background: repeating-linear-gradient(#aaa 0 1px, #fff 1px 2px);
}
.vscroll .before {
  flex: 266;
}
.vscroll .thumb {
  flex: 112;
}
.vscroll .after {
  flex: 122;
}
.hscroll .before {
  flex: 81;
}
.hscroll .thumb {
  flex: 102;
}
.hscroll .after {
  flex: 94;
}
.pagebar {
  display: flex;
  grid-column: 2 / 4;
}
.pages {
  display: flex;
  align-items: center;
  width: 326px;
  border-top: 1px solid #a5a29a;
  border-right: 1px solid #a5a29a;
}
.pages button {
  width: 14px;
}
.pages svg {
  width: 12px;
  height: 12px;
}
.pages span {
  width: 62px;
  text-align: center;
}
.pagetab {
  width: 87px;
  margin-left: 1px;
  padding-left: 12px;
  background: #fff;
  clip-path: polygon(0 0, 80px 0, 100% 8px, 100% 100%, 0 100%);
  color: #000;
  line-height: 13px;
  text-decoration: none;
}
.nav svg {
  width: 15px;
  height: 14px;
}
.docpalette {
  display: flex;
  grid-column: 1 / 4;
  align-items: center;
  margin-right: 13px;
  padding-left: 4px;
  border-bottom: 1px solid #cfccc4;
  border-top: 1px solid #fff;
}
.docpalette .fill {
  align-self: stretch;
  background: #fff;
}
.docpalette .ic14 {
  margin: 0 2px 0 3px;
}
.grip-v {
  width: 3px;
  height: 12px;
  margin-right: 2px;
  background: repeating-linear-gradient(#bbb 0 2px, transparent 2px 4px);
}
.chip {
  width: 17px;
  height: 18px;
  border: 1px solid #555;
}
.chip.black {
  background: #151817;
}
.chip.white {
  background: #fff;
}

/* docker */
.docker {
  display: grid;
  grid-template-columns: 1fr 25px;
  grid-template-rows: 23px 1fr;
  flex: none;
  width: 265px;
  border-left: 1px solid #cfccc4;
}
.docker-head {
  display: flex;
  grid-column: 1 / 3;
  align-items: center;
  padding: 0 2px 0 6px;
  border-bottom: 1px solid #bcb9b0;
  background: #d4d1c9;
}
.docker-head h2 {
  flex: 1;
  padding-top: 2px;
  font-size: 11px;
  font-weight: normal;
}
.docker-head button {
  width: 20px;
}
.docker-head svg {
  width: 10px;
  height: 9px;
  margin: 0 auto;
}
.docker-body {
  display: flex;
  flex-direction: column;
  padding: 10px 8px 0 10px;
}
.modes {
  display: flex;
  margin: 0 0 8px 31px;
}
.modes button {
  display: flex;
  align-items: center;
  justify-content: center;
  width: 26px;
  height: 24px;
}
.modes svg {
  width: 17px;
  height: 17px;
}
hr {
  border: 0;
  border-top: 1px solid #cfccc4;
}
.fields {
  display: grid;
  grid-template-columns: 44px 90px;
  gap: 3px 4px;
  align-items: center;
  margin: 12px 0 8px;
}
.fields label {
  text-align: right;
}
.fields b {
  color: #55557a;
}
.copies {
  margin: 7px 0 8px;
}
.spin {
  display: grid;
  grid-template-columns: 1fr 14px;
  padding: 1px;
  border: 1px solid #bcb8ae;
  background: #fff;
}
.spin input {
  grid-row: 1 / 3;
  height: 18px;
  padding: 0 1px;
  border: 0;
}
.spin button {
  display: flex;
  align-items: center;
  justify-content: center;
  height: 9px;
  border: 1px solid #a9a69d;
  border-radius: 2px;
  background: #f2f0eb;
}
.spin svg {
  width: 8px;
  height: 5px;
}
.check {
  display: flex;
  align-items: center;
  gap: 2px;
  margin-left: 48px;
  white-space: nowrap;
}
.check input {
  display: grid;
  flex: none;
  place-items: center;
  width: 13px;
  height: 13px;
  padding: 0 0 2px;
  border: 1px solid #6e6a62;
  appearance: none;
}
.check input::after {
  content: "";
  width: 5px;
  height: 9px;
  border: solid #555;
  border-width: 0 2px 2px 0;
  transform: rotate(40deg);
}
.anchors {
  width: 40px;
  height: 40px;
  margin: 8px 0 15px 50px;
}
.apply {
  align-self: flex-end;
  width: 87px;
  height: 22px;
  margin-top: 8px;
  border: 1px solid #99958c;
  border-bottom-width: 2px;
  border-radius: 6px;
  background: linear-gradient(#fff, #dedbd5);
}
.docker-tabs {
  display: flex;
  flex-direction: column;
  padding-right: 4px;
  border-left: 1px solid #d8d5cd;
}
.docker-tabs button {
  display: flex;
  flex-direction: column;
  align-items: center;
  gap: 3px;
  padding: 6px 0 0 3px;
  border: solid #cfccc4;
  border-width: 0 1px 1px 0;
  border-radius: 0 0 5px 0;
  color: #858585;
}
.docker-tabs span {
  writing-mode: vertical-rl;
  white-space: nowrap;
}
.docker-tabs svg {
  width: 16px;
  height: 16px;
}
.docker-tabs .tab1 {
  height: 137px;
  padding-top: 9px;
  background: linear-gradient(90deg, #ece9e2, #fff);
  color: #000;
}
.docker-tabs .tab2 {
  height: 135px;
  background: #cccdcf;
}
.docker-tabs .tab3 {
  height: 224px;
  padding-top: 4px;
}
.docker-tabs .tab4 {
  height: 45px;
  padding-top: 4px;
}
.docker-tabs .moretabs {
  border: 0;
  padding-top: 9px;
}
.moretabs svg {
  width: 10px;
  height: 9px;
}

/* palettes */
.palette {
  display: flex;
  flex: none;
  flex-direction: column;
  align-items: center;
  width: 20px;
  padding-right: 1px;
  border-left: 1px solid #cfccc4;
}
.grip {
  width: 11px;
  height: 2px;
  margin: 4px 0 3px;
  background: repeating-linear-gradient(90deg, #bbb 0 2px, transparent 2px 4px);
}
.palette .ic14 {
  margin: 2px 0 1px;
}
.pgup,
.pgdn {
  width: 17px;
  height: 17px;
}
.pgup {
  border: 1px solid #d8d5cd;
}
.palette button svg {
  width: 10px;
  height: 10px;
  margin: 0 auto;
}
.pgup + svg {
  margin-top: 1px;
}
.swatches i {
  display: block;
  width: 18px;
  height: 17px;
  border: 1px solid #555;
  border-top: 0;
}
.swatches .picked {
  border: 2px solid #000;
  outline: 1px solid #fff;
  outline-offset: -1px;
}
.palette .pgdn {
  width: 17px;
  height: 17px;
  margin-top: 1px;
}
.first {
  width: 8px;
  height: 10px;
  margin-top: 4px;
}
.blank {
  flex: 1;
  width: 18px;
  margin-bottom: 15px;
  background: #fff;
}

/* status */
.status {
  display: flex;
  align-items: center;
  height: 45px;
  padding: 0 5px 2px;
  border-top: 1px solid #fff;
}
.lines {
  width: 702px;
}
.lines p {
  display: flex;
  align-items: center;
  height: 21px;
  white-space: nowrap;
}
.coords {
  width: 114px;
}
.object {
  margin-left: 133px;
}
.tri {
  margin-left: 5px;
  border: solid transparent;
  border-width: 4px 0 4px 5px;
  border-left-color: #000;
}
.coords + .tri {
  margin: 0;
}
.proof {
  align-self: flex-start;
  width: 16px;
  height: 16px;
  margin: 3px 56px 0 0;
}
.colors {
  display: grid;
  grid-template-columns: 20px 18px auto;
  gap: 3px;
  align-items: center;
}
.colors .ic16 {
  justify-self: center;
}
.outline {
  width: 18px;
  height: 18px;
  border: 1px solid #777;
  background: #fff;
}
.user {
  width: 20px;
  margin-left: auto;
  padding-bottom: 5px;
}
.user svg {
  width: 16px;
  height: 16px;
}
.taskbar {
  height: 4px;
  border-top: 1px solid #3f5876;
  background: linear-gradient(#c7d4ec, #7f99c8);
}
```
